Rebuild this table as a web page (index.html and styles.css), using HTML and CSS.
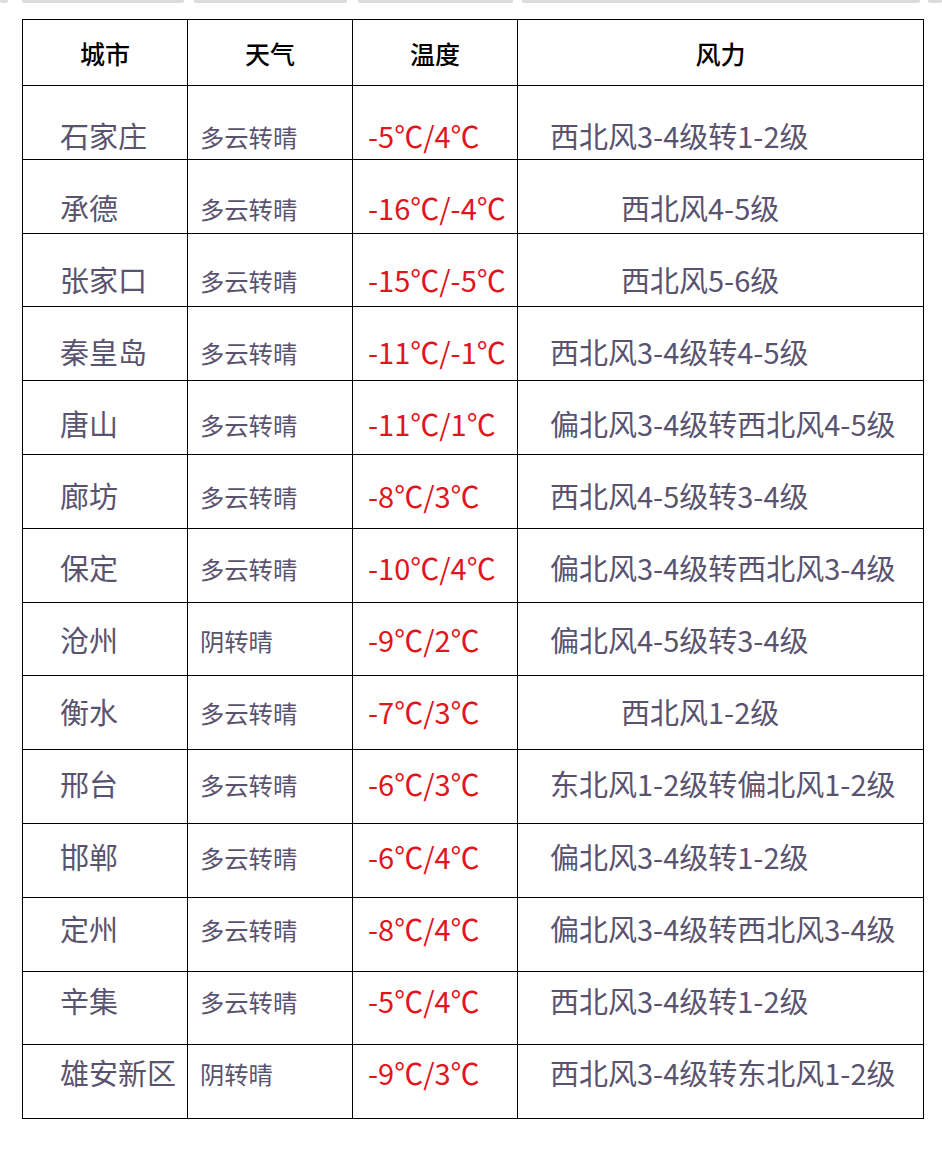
FILE: index.html
```html
<!DOCTYPE html>
<html lang="zh-CN">
<head>
<meta charset="utf-8">
<title>河北天气</title>
<link rel="stylesheet" href="styles.css">
</head>
<body>
<div class="strips">
  <span class="strip s1"></span>
  <span class="strip s2"></span>
  <span class="strip s3"></span>
  <span class="strip s4"></span>
  <span class="strip s5"></span>
  <span class="strip s6"></span>
</div>
<table class="weather">
  <colgroup>
    <col class="c-city"><col class="c-wx"><col class="c-temp"><col class="c-wind">
  </colgroup>
  <thead>
    <tr><th>城市</th><th>天气</th><th>温度</th><th>风力</th></tr>
  </thead>
  <tbody>
    <tr><td class="city">石家庄</td><td class="wx">多云转晴</td><td class="temp">-5℃/4℃</td><td class="wind">西北风3-4级转1-2级</td></tr>
    <tr><td class="city">承德</td><td class="wx">多云转晴</td><td class="temp">-16℃/-4℃</td><td class="wind short">西北风4-5级</td></tr>
    <tr><td class="city">张家口</td><td class="wx">多云转晴</td><td class="temp">-15℃/-5℃</td><td class="wind short">西北风5-6级</td></tr>
    <tr><td class="city">秦皇岛</td><td class="wx">多云转晴</td><td class="temp">-11℃/-1℃</td><td class="wind">西北风3-4级转4-5级</td></tr>
    <tr><td class="city">唐山</td><td class="wx">多云转晴</td><td class="temp">-11℃/1℃</td><td class="wind">偏北风3-4级转西北风4-5级</td></tr>
    <tr><td class="city">廊坊</td><td class="wx">多云转晴</td><td class="temp">-8℃/3℃</td><td class="wind">西北风4-5级转3-4级</td></tr>
    <tr><td class="city">保定</td><td class="wx">多云转晴</td><td class="temp">-10℃/4℃</td><td class="wind">偏北风3-4级转西北风3-4级</td></tr>
    <tr><td class="city">沧州</td><td class="wx">阴转晴</td><td class="temp">-9℃/2℃</td><td class="wind">偏北风4-5级转3-4级</td></tr>
    <tr><td class="city">衡水</td><td class="wx">多云转晴</td><td class="temp">-7℃/3℃</td><td class="wind short">西北风1-2级</td></tr>
    <tr><td class="city">邢台</td><td class="wx">多云转晴</td><td class="temp">-6℃/3℃</td><td class="wind">东北风1-2级转偏北风1-2级</td></tr>
    <tr><td class="city">邯郸</td><td class="wx">多云转晴</td><td class="temp">-6℃/4℃</td><td class="wind">偏北风3-4级转1-2级</td></tr>
    <tr><td class="city">定州</td><td class="wx">多云转晴</td><td class="temp">-8℃/4℃</td><td class="wind">偏北风3-4级转西北风3-4级</td></tr>
    <tr><td class="city">辛集</td><td class="wx">多云转晴</td><td class="temp">-5℃/4℃</td><td class="wind">西北风3-4级转1-2级</td></tr>
    <tr><td class="city">雄安新区</td><td class="wx">阴转晴</td><td class="temp">-9℃/3℃</td><td class="wind">西北风3-4级转东北风1-2级</td></tr>
  </tbody>
</table>
</body>
</html>
```

FILE: styles.css
```css
html, body {
  margin: 0;
  padding: 0;
  background: #ffffff;
}

body {
  font-family: "Noto Sans CJK SC", "Noto Sans", sans-serif;
}

.strips {
  display: flex;
  height: 3px;
}

.strip {
  display: block;
  height: 3px;
  background: #dcdcdc;
  border-radius: 0 0 2px 2px;
}

.s1 { width: 8px; margin-right: 14px; }
.s2 { width: 162px; margin-right: 10px; }
.s3 { width: 153px; margin-right: 11px; }
.s4 { width: 155px; margin-right: 9px; }
.s5 { width: 398px; margin-right: 8px; }
.s6 { width: 14px; }

.weather {
  margin: 16px 0 0 22px;
  width: 901px;
  table-layout: fixed;
  border-collapse: collapse;
  border: 1.5px solid #000;
}

.c-city, .c-wx, .c-temp { width: 165px; }
.c-wind { width: 406px; }

.weather th,
.weather td {
  border: 1.5px solid #000;
  padding: 0;
}

.weather th {
  height: 65px;
  font-size: 25px;
  font-weight: 500;
  color: #000;
  text-align: center;
  vertical-align: middle;
  line-height: 30px;
}

.weather tbody tr {
  height: 73.8px;
}

.weather td {
  vertical-align: bottom;
  color: #5a5370;
  text-align: left;
  white-space: nowrap;
  padding-bottom: 4px;
}

/* the text baseline steps slightly tighter than the ruled rows */
.weather tbody tr:nth-child(2) td { padding-bottom: 5.7px; }
.weather tbody tr:nth-child(3) td { padding-bottom: 7.4px; }
.weather tbody tr:nth-child(4) td { padding-bottom: 9.2px; }
.weather tbody tr:nth-child(5) td { padding-bottom: 10.9px; }
.weather tbody tr:nth-child(6) td { padding-bottom: 12.6px; }
.weather tbody tr:nth-child(7) td { padding-bottom: 14.3px; }
.weather tbody tr:nth-child(8) td { padding-bottom: 16px; }
.weather tbody tr:nth-child(9) td { padding-bottom: 17.8px; }
.weather tbody tr:nth-child(10) td { padding-bottom: 19.5px; }
.weather tbody tr:nth-child(11) td { padding-bottom: 21.2px; }
.weather tbody tr:nth-child(12) td { padding-bottom: 22.9px; }
.weather tbody tr:nth-child(13) td { padding-bottom: 24.6px; }
.weather tbody tr:nth-child(14) td { padding-bottom: 26.4px; }

.city {
  font-size: 29px;
  line-height: 40px;
  padding-left: 37px !important;
}

.wx {
  font-size: 24.3px;
  line-height: 36px;
  padding-left: 12px !important;
}

.temp {
  font-size: 29px;
  line-height: 40px;
  color: #e3141b !important;
  padding-left: 15px !important;
}

.wind {
  font-size: 29px;
  line-height: 40px;
  padding-left: 32px !important;
}

.wind.short {
  padding-left: 103px !important;
}
```
